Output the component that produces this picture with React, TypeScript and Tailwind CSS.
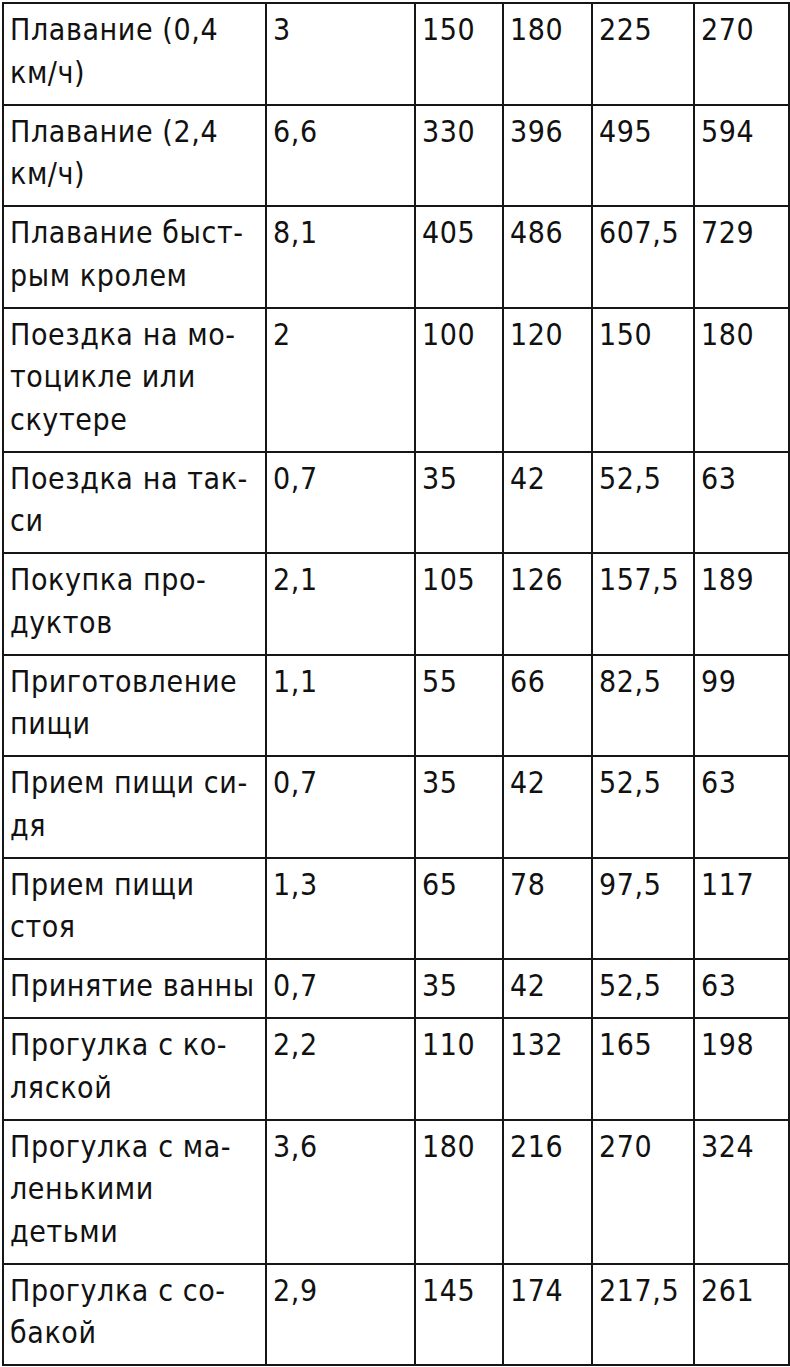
import React from 'react';

// Energy expenditure table: activity, MET, then kcal for four body weights.
type Row = { name: string[]; met: string; vals: string[] };

const rows: Row[] = [
  { name: ['Плавание (0,4', 'км/ч)'], met: '3', vals: ['150', '180', '225', '270'] },
  { name: ['Плавание (2,4', 'км/ч)'], met: '6,6', vals: ['330', '396', '495', '594'] },
  { name: ['Плавание быст-', 'рым кролем'], met: '8,1', vals: ['405', '486', '607,5', '729'] },
  { name: ['Поездка на мо-', 'тоцикле или', 'скутере'], met: '2', vals: ['100', '120', '150', '180'] },
  { name: ['Поездка на так-', 'си'], met: '0,7', vals: ['35', '42', '52,5', '63'] },
  { name: ['Покупка про-', 'дуктов'], met: '2,1', vals: ['105', '126', '157,5', '189'] },
  { name: ['Приготовление', 'пищи'], met: '1,1', vals: ['55', '66', '82,5', '99'] },
  { name: ['Прием пищи си-', 'дя'], met: '0,7', vals: ['35', '42', '52,5', '63'] },
  { name: ['Прием пищи', 'стоя'], met: '1,3', vals: ['65', '78', '97,5', '117'] },
  { name: ['Принятие ванны'], met: '0,7', vals: ['35', '42', '52,5', '63'] },
  { name: ['Прогулка с ко-', 'ляской'], met: '2,2', vals: ['110', '132', '165', '198'] },
  { name: ['Прогулка с ма-', 'ленькими', 'детьми'], met: '3,6', vals: ['180', '216', '270', '324'] },
  { name: ['Прогулка с со-', 'бакой'], met: '2,9', vals: ['145', '174', '217,5', '261'] },
];

const cell = 'border-2 border-[#161616] align-top pl-[6px] pr-0 pt-[5px] pb-[9.5px] leading-[42.5px]';

export default function App() {
  return (
    <div className="w-[790px] bg-white pt-[2px] pl-[2px] pr-[1px] text-[#111] font-['DejaVu_Sans',sans-serif] text-[30px] tracking-[0.6px] [font-stretch:condensed]">
      <table className="w-[786px] table-fixed border-collapse">
        <colgroup>
          <col className="w-[263px]" />
          <col className="w-[149px]" />
          <col className="w-[88px]" />
          <col className="w-[89px]" />
          <col className="w-[102px]" />
          <col className="w-[95px]" />
        </colgroup>
        <tbody>
          {rows.map((r, i) => (
            <tr key={i}>
              <td className={cell}>
                {r.name.map((line, j) => (
                  <div key={j} className="whitespace-nowrap">{line}</div>
                ))}
              </td>
              <td className={cell}>{r.met}</td>
              {r.vals.map((v, j) => (
                <td key={j} className={cell}>{v}</td>
              ))}
            </tr>
          ))}
        </tbody>
      </table>
    </div>
  );
}
